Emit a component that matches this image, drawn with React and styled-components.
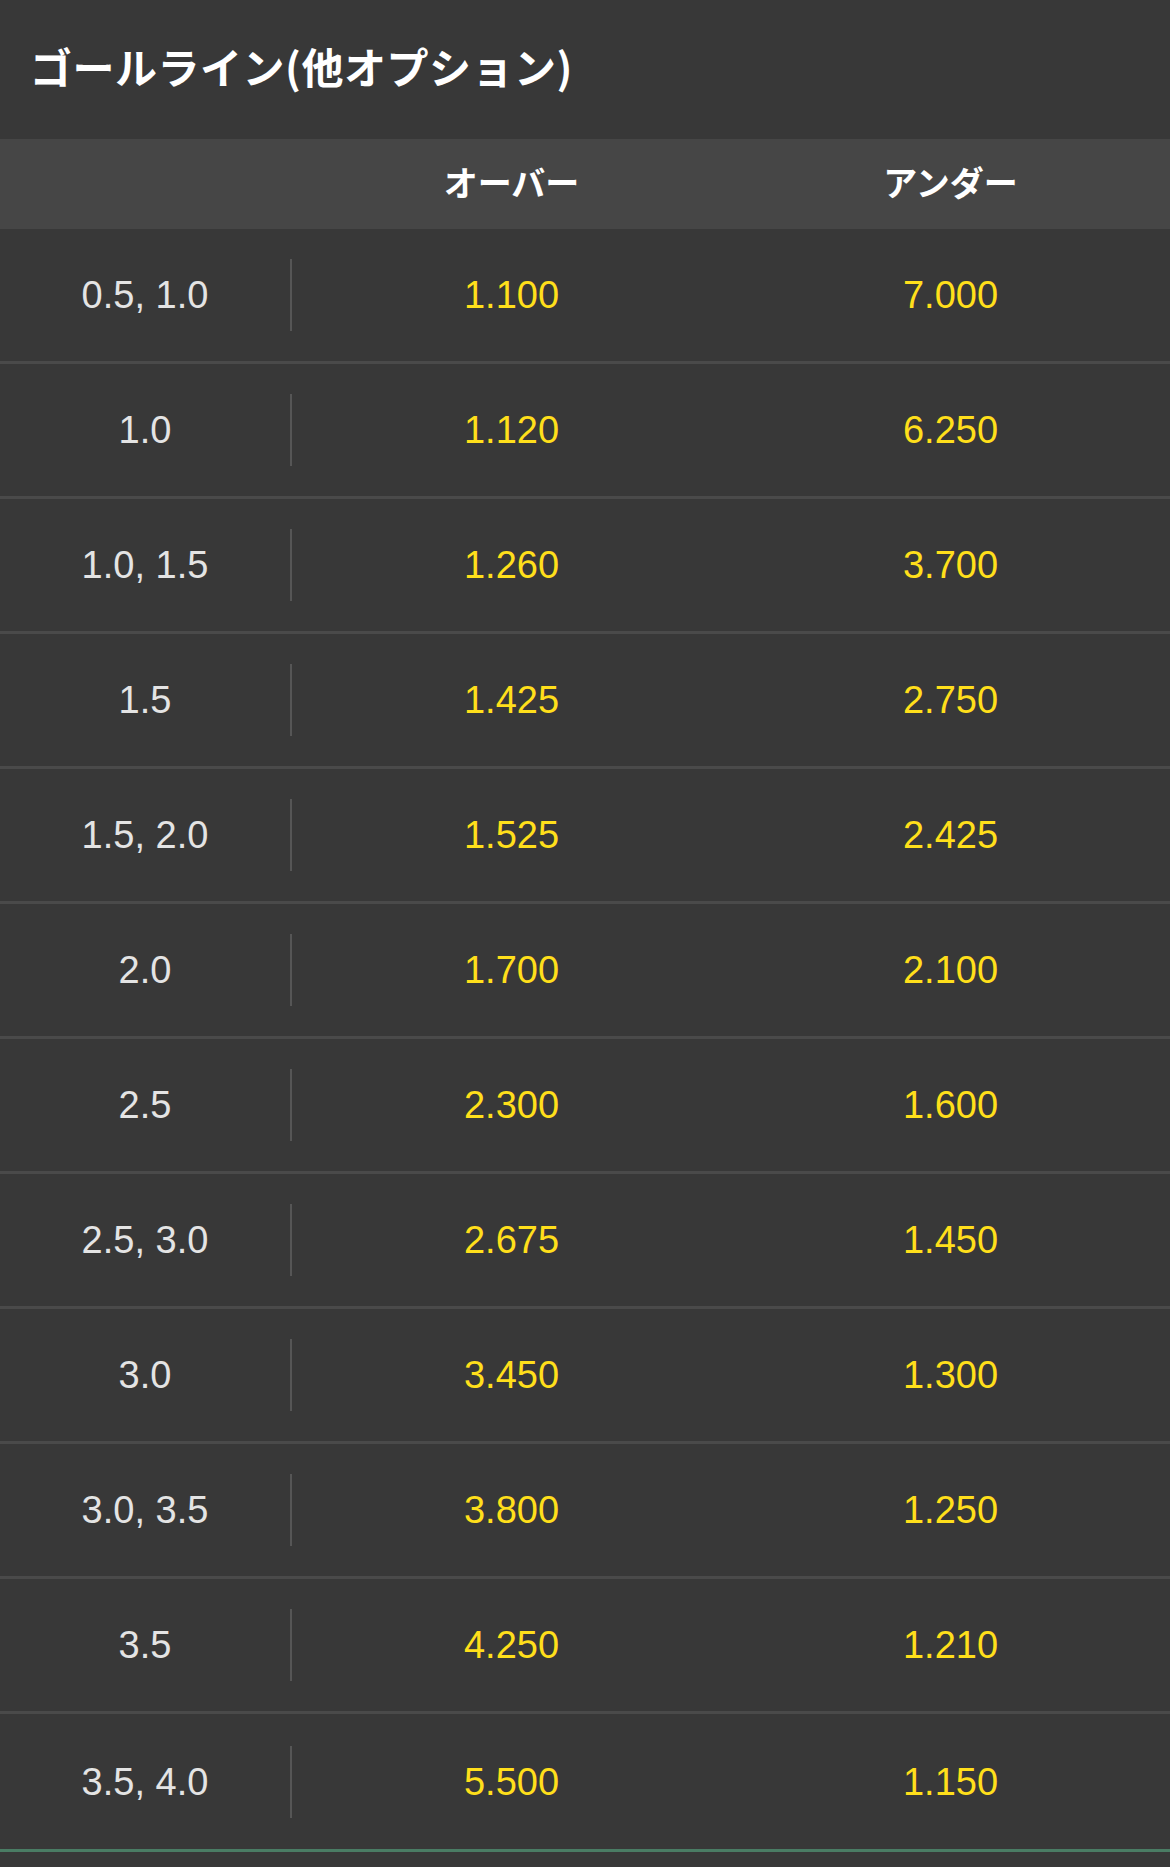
import React from "react";
import styled, { createGlobalStyle } from "styled-components";

const GlobalStyle = createGlobalStyle`
  html, body {
    margin: 0;
    padding: 0;
    background: #383838;
  }
  * { box-sizing: border-box; }
`;

const Page = styled.div`
  width: 1170px;
  background: #383838;
  font-family: "Liberation Sans", "Noto Sans CJK JP", sans-serif;
`;

const Title = styled.h1`
  margin: 0;
  height: 139px;
  display: flex;
  align-items: center;
  padding-left: 30px;
  padding-bottom: 8px;
  color: #ffffff;
  font-family: "Noto Sans CJK JP", sans-serif;
  font-weight: 700;
  font-size: 42px;
  letter-spacing: 0.5px;
`;

const Grid = styled.div`
  display: grid;
  grid-template-columns: 290px 2px 439px 439px;
  align-items: center;
`;

const HeaderRow = styled(Grid)`
  height: 90px;
  background: #464646;
  padding-bottom: 4px;
`;

const HeaderCell = styled.div`
  grid-column: ${(p) => p.$col};
  text-align: center;
  color: #ffffff;
  font-family: "Noto Sans CJK JP", sans-serif;
  font-weight: 700;
  font-size: 34px;
  line-height: 1;
`;

const Row = styled(Grid)`
  height: ${(p) => (p.$last ? 138 : 135)}px;
  border-bottom: 3px solid ${(p) => (p.$last ? "#4a7c64" : "#4a4a4a")};
`;

const Label = styled.div`
  text-align: center;
  color: #e4e4e4;
  font-size: 38px;
  line-height: 1;
`;

const Divider = styled.div`
  width: 2px;
  height: 72px;
  background: #565656;
`;

const Odds = styled.div`
  text-align: center;
  color: #ffdf1b;
  font-size: 38px;
  line-height: 1;
`;

const data = [
  ["0.5, 1.0", "1.100", "7.000"],
  ["1.0", "1.120", "6.250"],
  ["1.0, 1.5", "1.260", "3.700"],
  ["1.5", "1.425", "2.750"],
  ["1.5, 2.0", "1.525", "2.425"],
  ["2.0", "1.700", "2.100"],
  ["2.5", "2.300", "1.600"],
  ["2.5, 3.0", "2.675", "1.450"],
  ["3.0", "3.450", "1.300"],
  ["3.0, 3.5", "3.800", "1.250"],
  ["3.5", "4.250", "1.210"],
  ["3.5, 4.0", "5.500", "1.150"],
];

export default function App() {
  return (
    <Page>
      <GlobalStyle />
      <Title>ゴールライン(他オプション)</Title>
      <HeaderRow>
        <HeaderCell $col={3}>オーバー</HeaderCell>
        <HeaderCell $col={4}>アンダー</HeaderCell>
      </HeaderRow>
      {data.map(([label, over, under], i) => (
        <Row key={label} $last={i === data.length - 1}>
          <Label>{label}</Label>
          <Divider />
          <Odds>{over}</Odds>
          <Odds>{under}</Odds>
        </Row>
      ))}
    </Page>
  );
}
